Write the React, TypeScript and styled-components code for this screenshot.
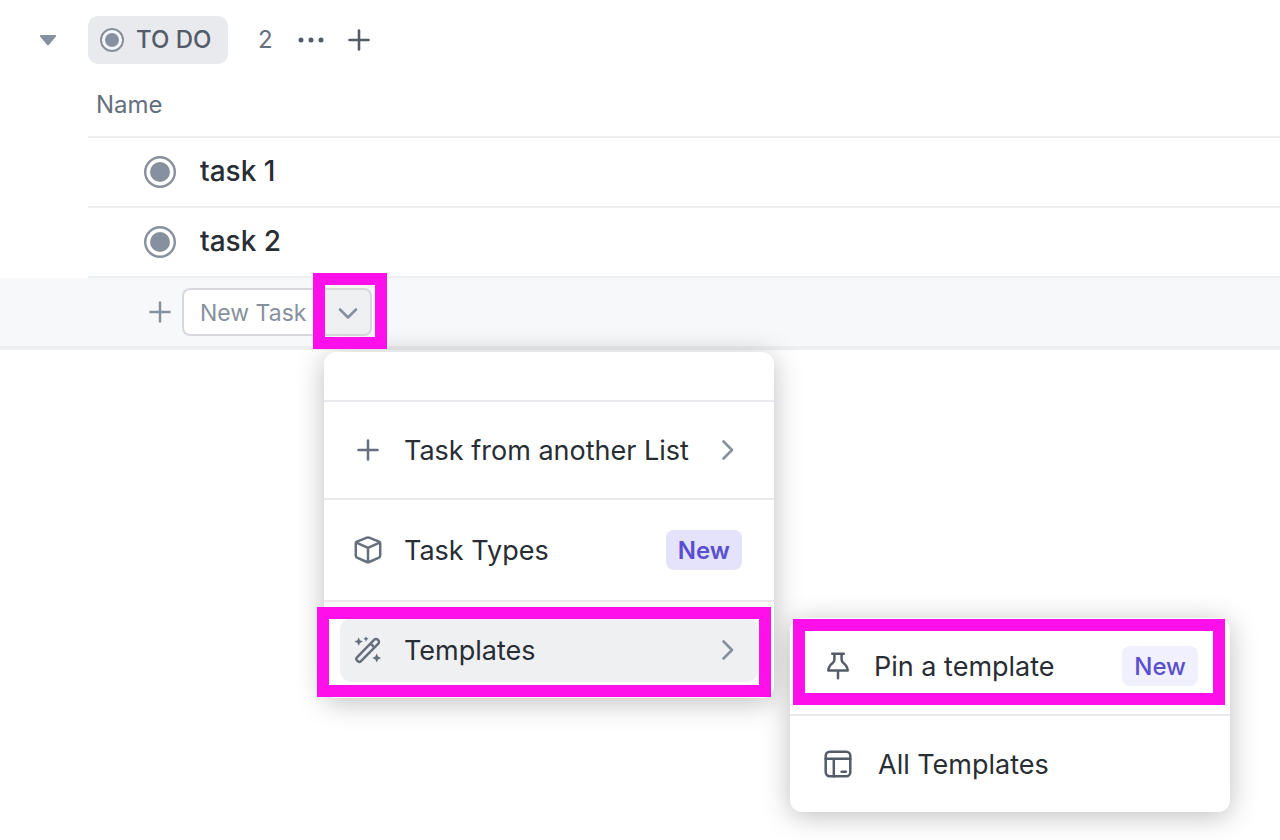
import React from "react";
import styled, { createGlobalStyle } from "styled-components";

const GlobalStyle = createGlobalStyle`
  *, *::before, *::after { box-sizing: border-box; }
  body {
    margin: 0;
    background: #ffffff;
    color: #292d34;
    font-family: Inter, "Liberation Sans", sans-serif;
    -webkit-font-smoothing: antialiased;
  }
  button { font: inherit; color: inherit; border: 0; padding: 0; background: none; cursor: pointer; }
  svg { display: block; flex: none; }
`;

const accent = "#ff0fea";

const Page = styled.main`
  min-height: 100vh;
`;

const GroupHeader = styled.header`
  display: flex;
  align-items: center;
  height: 80px;
  padding-left: 36px;
  color: #545c69;
  font-size: 24px;
  line-height: 32px;
`;

const CollapseButton = styled.button`
  display: flex;
  width: 24px;
  margin-right: 28px;
  color: #87909e;
`;

const StatusPill = styled.button`
  display: flex;
  align-items: center;
  gap: 12px;
  min-width: 140px;
  height: 48px;
  padding: 0 12px;
  border-radius: 10px;
  background: #e8eaed;
  font-weight: 500;
`;

const Count = styled.span`
  margin-left: 30px;
  color: #656f7d;
`;

const HeaderActions = styled.div`
  display: flex;
  gap: 22px;
  margin-left: 24px;
`;

const IconButton = styled.button`
  display: flex;
`;

const TaskTable = styled.table`
  width: calc(100% - 88px);
  margin-left: 88px;
  border-collapse: separate;
  border-spacing: 0;
`;

const ColumnTitle = styled.th`
  height: 58px;
  padding: 0 8px 6px;
  border-bottom: 2px solid #eeeff1;
  color: #656f7d;
  font-size: 24px;
  line-height: 32px;
  font-weight: 400;
  text-align: left;
`;

const TaskCell = styled.td`
  height: 70px;
  padding: 0 56px;
  border-bottom: 2px solid #eeeff1;
`;

const TaskLine = styled.div`
  display: flex;
  align-items: center;
  gap: 24px;
  font-size: 28px;
  line-height: 32px;
  font-weight: 500;
`;

const TaskName = styled.span`
  padding-bottom: 2px;
`;

const NewTaskRow = styled.div`
  display: flex;
  align-items: center;
  gap: 10px;
  height: 72px;
  padding-left: 148px;
  border-bottom: 4px solid #eeeff1;
  background: #f7f8fa;
  color: #87909e;
`;

const SplitControl = styled.div`
  position: relative;
  display: flex;
`;

const NewTaskButton = styled.button`
  height: 48px;
  width: 142px;
  padding: 2px 0 0 16px;
  border: 2px solid #d6d8db;
  border-right: 0;
  border-radius: 8px 0 0 8px;
  background: #ffffff;
  font-size: 23px;
  line-height: 32px;
  text-align: left;
  white-space: nowrap;
`;

const ToggleButton = styled.button`
  display: flex;
  align-items: center;
  justify-content: center;
  width: 48px;
  height: 48px;
  padding: 2px 0 0 2px;
  border: 2px solid #d6d8db;
  border-left: 0;
  border-radius: 0 8px 8px 0;
  background: #eff0f2;
`;

const Highlight = styled.span<{ $inset: string }>`
  position: absolute;
  inset: ${(p) => p.$inset};
  z-index: 2;
  border: 12px solid ${accent};
  pointer-events: none;
`;

const Menu = styled.div<{ $top: number; $left: number; $width: number }>`
  position: absolute;
  z-index: 1;
  top: ${(p) => p.$top}px;
  left: ${(p) => p.$left}px;
  width: ${(p) => p.$width}px;
  border-radius: 12px;
  background: #ffffff;
  box-shadow: 0 4px 28px rgba(0, 0, 0, 0.26);
  color: #292d34;
`;

const MenuSection = styled.div<{ $height: number; $padding?: number }>`
  position: relative;
  height: ${(p) => p.$height}px;
  padding: ${(p) => p.$padding ?? 16}px 16px;

  & + & {
    border-top: 2px solid #e8e9ee;
  }
`;

const MenuItem = styled.button<{ $active?: boolean; $gap?: number; $indent?: number }>`
  display: flex;
  align-items: center;
  gap: ${(p) => p.$gap ?? 22}px;
  width: 100%;
  height: 64px;
  padding: 0 16px 0 ${(p) => p.$indent ?? 14}px;
  border-radius: 12px;
  background: ${(p) => (p.$active ? "#eff0f2" : "transparent")};
  font-size: 27px;
  line-height: 36px;
  text-align: left;
  white-space: nowrap;
`;

const ItemLabel = styled.span`
  flex: 1;
  padding-top: 2px;
`;

const ItemIcon = styled.span<{ $dark?: boolean }>`
  display: flex;
  color: ${(p) => (p.$dark ? "#545c69" : "#656f7d")};
`;

const Badge = styled.span<{ $soft?: boolean }>`
  height: 40px;
  padding: 2px 12px 0;
  border-radius: 8px;
  background: ${(p) => (p.$soft ? "#f1f0fe" : "#e5e2fc")};
  color: #5a4fcf;
  font-size: 24px;
  line-height: 38px;
  font-weight: ${(p) => (p.$soft ? 500 : 600)};
`;

function StatusIcon({ size, ring, dot }: { size: number; ring: number; dot: number }) {
  const c = size / 2;
  return (
    <svg width={size} height={size} aria-hidden="true">
      <circle cx={c} cy={c} r={c - ring / 2} fill="#fff" fillOpacity="0.6" stroke="#87909e" strokeWidth={ring} />
      <circle cx={c} cy={c} r={dot} fill="#87909e" />
    </svg>
  );
}

function PlusIcon({ size = 24, stroke = 2.5 }: { size?: number; stroke?: number }) {
  return (
    <svg width={size} height={size} viewBox={`${-size / 2} ${-size / 2} ${size} ${size}`} fill="none" stroke="currentColor" strokeWidth={stroke} strokeLinecap="round" aria-hidden="true">
      <path d="M-9.5 0h19M0-9.5v19" />
    </svg>
  );
}

function ChevronRight() {
  return (
    <svg width="28" height="28" fill="none" stroke="#87909e" strokeWidth="2.6" strokeLinecap="round" strokeLinejoin="round" aria-hidden="true">
      <path d="M9.500 5.500l8.500 8.500-8.500 8.500" />
    </svg>
  );
}

function CubeIcon() {
  return (
    <svg width="28" height="28" fill="none" stroke="currentColor" strokeWidth="2.5" strokeLinejoin="round" aria-hidden="true">
      <path d="M12.9 1.7a3 3 0 0 1 2.2 0l10 4a1.8 1.8 0 0 1 1.1 1.7v12.4a2 2 0 0 1-1.2 1.800l-9.900 4.400a2.600 2.600 0 0 1-2.200 0L3 21.600a2 2 0 0 1-1.200-1.800V7.400a1.800 1.800 0 0 1 1.100-1.700z" />
      <path d="M2.400 6.700L14 11.800l11.600-5.100M14 11.800V26" />
    </svg>
  );
}

function WandIcon() {
  return (
    <svg width="28" height="28" fill="none" stroke="currentColor" strokeWidth="2.5" strokeLinejoin="round" aria-hidden="true">
      <path d="M3 21.300L20.300 3.700a2.400 2.400 0 0 1 3.400 0l.6.600a2.400 2.400 0 0 1 0 3.400L7 25.200a2.300 2.300 0 0 1-3.200 0l-.800-.800a2.300 2.300 0 0 1 0-3.100zM16.600 7.600l4 4" />
      <g fill="currentColor" stroke="none">
        <path d="M4.700 1.400l1.300 2.900 2.900 1.300-2.900 1.300-1.300 2.900-1.300-2.900-2.900-1.300 2.900-1.300z" />
        <path d="M12 .2l.9 1.700 1.700.9-1.700.9-.9 1.700-.9-1.700-1.700-.9 1.700-.9z" />
        <path d="M22.700 17.600l1.400 3 3 1.400-3 1.400-1.400 3-1.400-3-3-1.400 3-1.400z" />
      </g>
    </svg>
  );
}

function PinIcon() {
  return (
    <svg width="28" height="28" fill="none" stroke="currentColor" strokeWidth="2.5" strokeLinecap="round" strokeLinejoin="round" aria-hidden="true">
      <path d="M8.200 1.700h11.600M10.400 1.700v6.100c0 1.600-.7 2.500-2 3.500-2.300 1.700-3.900 3.600-4.100 7.300h19.400c-.2-3.700-1.800-5.600-4.100-7.300-1.300-1-2-1.900-2-3.500V1.700M14 18.600v7.600" />
    </svg>
  );
}

function TemplateIcon() {
  return (
    <svg width="28" height="28" fill="none" stroke="currentColor" strokeWidth="2.5" strokeLinecap="round" aria-hidden="true">
      <rect x="1.700" y="1.700" width="24.600" height="24.600" rx="4" />
      <path d="M1.700 8.800h24.600M9.800 8.800v17.500M17.600 21.700h4.300" />
    </svg>
  );
}

const tasks = ["task 1", "task 2"];

export default function App() {
  return (
    <Page>
      <GlobalStyle />
      <GroupHeader>
        <CollapseButton aria-label="Collapse group">
          <svg width="24" height="24" aria-hidden="true">
            <path d="M5 8h14l-7 8.300z" fill="currentColor" stroke="currentColor" strokeWidth="2" strokeLinejoin="round" />
          </svg>
        </CollapseButton>
        <StatusPill>
          <StatusIcon size={24} ring={2} dot={7} />
          TO DO
        </StatusPill>
        <Count>2</Count>
        <HeaderActions>
          <IconButton aria-label="More options">
            <svg width="28" height="24" fill="currentColor" aria-hidden="true">
              <circle cx="4" cy="12" r="2.500" />
              <circle cx="14" cy="12" r="2.500" />
              <circle cx="24" cy="12" r="2.500" />
            </svg>
          </IconButton>
          <IconButton aria-label="Add task">
            <PlusIcon stroke={2.6} />
          </IconButton>
        </HeaderActions>
      </GroupHeader>

      <TaskTable>
        <thead>
          <tr>
            <ColumnTitle scope="col">Name</ColumnTitle>
          </tr>
        </thead>
        <tbody>
          {tasks.map((name) => (
            <tr key={name}>
              <TaskCell>
                <TaskLine>
                  <StatusIcon size={32} ring={2.4} dot={10} />
                  <TaskName>{name}</TaskName>
                </TaskLine>
              </TaskCell>
            </tr>
          ))}
        </tbody>
      </TaskTable>

      <NewTaskRow>
        <IconButton aria-label="Add">
          <PlusIcon />
        </IconButton>
        <SplitControl>
          <NewTaskButton>New Task</NewTaskButton>
          <ToggleButton aria-label="Choose task type" aria-expanded="true">
            <svg width="24" height="24" fill="none" stroke="currentColor" strokeWidth="2.6" strokeLinecap="round" strokeLinejoin="round" aria-hidden="true">
              <path d="M4 8.500l8 8 8-8" />
            </svg>
          </ToggleButton>
          <Highlight $inset="-15px -15px -13px 131px" />

          <Menu $top={64} $left={142} $width={450}>
            <MenuSection $height={48} />
            <MenuSection $height={98}>
              <MenuItem>
                <ItemIcon><PlusIcon size={28} /></ItemIcon>
                <ItemLabel>Task from another List</ItemLabel>
                <ChevronRight />
              </MenuItem>
            </MenuSection>
            <MenuSection $height={102} $padding={18}>
              <MenuItem>
                <ItemIcon><CubeIcon /></ItemIcon>
                <ItemLabel>Task Types</ItemLabel>
                <Badge>New</Badge>
              </MenuItem>
            </MenuSection>
            <MenuSection $height={98}>
              <MenuItem $active>
                <ItemIcon><WandIcon /></ItemIcon>
                <ItemLabel>Templates</ItemLabel>
                <ChevronRight />
              </MenuItem>
              <Highlight $inset="5px 3px 1px -7px" />

              <Menu $top={16} $left={466} $width={440}>
                <MenuSection $height={96}>
                  <MenuItem $indent={18}>
                    <ItemIcon $dark><PinIcon /></ItemIcon>
                    <ItemLabel>Pin a template</ItemLabel>
                    <Badge $soft>New</Badge>
                  </MenuItem>
                  <Highlight $inset="1px 5px 9px 3px" />
                </MenuSection>
                <MenuSection $height={98}>
                  <MenuItem $indent={18} $gap={26}>
                    <ItemIcon $dark><TemplateIcon /></ItemIcon>
                    <ItemLabel>All Templates</ItemLabel>
                  </MenuItem>
                </MenuSection>
              </Menu>
            </MenuSection>
          </Menu>
        </SplitControl>
      </NewTaskRow>
    </Page>
  );
}
